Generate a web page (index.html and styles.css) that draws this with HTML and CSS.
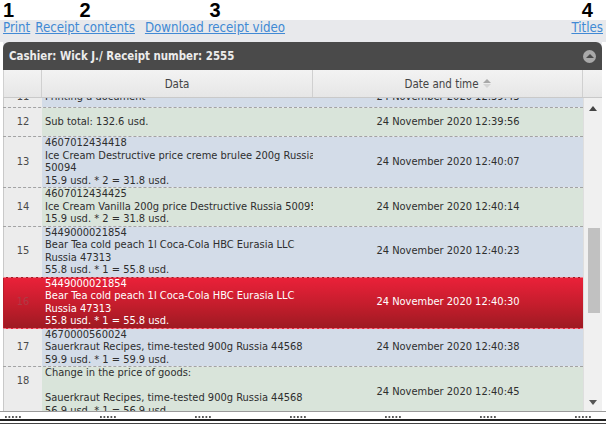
FILE: index.html
```html
<!DOCTYPE html>
<html lang="en">
<head>
  <meta charset="UTF-8">
  <title>Receipt</title>
  <link rel="stylesheet" href="styles.css">
</head>
<body>
  <div class="tools">
    <div class="tool first"><b>1</b><a href="#">Print</a></div>
    <div class="tool second"><b>2</b><a href="#">Receipt contents</a></div>
    <div class="tool third"><b>3</b><a href="#">Download receipt video</a></div>
    <div class="tool last"><b>4</b><a href="#">Titles</a></div>
  </div>

  <div class="panel">
    <div class="panel-head">
      <span>Cashier: Wick J./ Receipt number: 2555</span>
      <span class="collapse"></span>
    </div>
    <div class="cols">
      <div></div>
      <div>Data</div>
      <div>Date and time <span class="sort"><i class="up"></i><i class="down"></i></span></div>
      <div></div>
    </div>
    <div class="body">
      <div class="rows">
        <div class="rows-inner">
          <div class="row blue partial">
            <div class="num">11</div>
            <div class="data">Printing a document</div>
            <div class="date">24 November 2020 12:39:43</div>
          </div>
          <div class="row green">
            <div class="num">12</div>
            <div class="data">Sub total: 132.6 usd.</div>
            <div class="date">24 November 2020 12:39:56</div>
          </div>
          <div class="row blue">
            <div class="num">13</div>
            <div class="data">4607012434418<br>Ice Cream Destructive price creme brulee 200g Russia<br>50094<br>15.9 usd. * 2 = 31.8 usd.</div>
            <div class="date">24 November 2020 12:40:07</div>
          </div>
          <div class="row green">
            <div class="num">14</div>
            <div class="data">4607012434425<br>Ice Cream Vanilla 200g price Destructive Russia 50095<br>15.9 usd. * 2 = 31.8 usd.</div>
            <div class="date">24 November 2020 12:40:14</div>
          </div>
          <div class="row blue">
            <div class="num">15</div>
            <div class="data">5449000021854<br>Bear Tea cold peach 1l Coca-Cola HBC Eurasia LLC<br>Russia 47313<br>55.8 usd. * 1 = 55.8 usd.</div>
            <div class="date">24 November 2020 12:40:23</div>
          </div>
          <div class="row selected">
            <div class="num">16</div>
            <div class="data">5449000021854<br>Bear Tea cold peach 1l Coca-Cola HBC Eurasia LLC<br>Russia 47313<br>55.8 usd. * 1 = 55.8 usd.</div>
            <div class="date">24 November 2020 12:40:30</div>
          </div>
          <div class="row blue">
            <div class="num">17</div>
            <div class="data">4670000560024<br>Sauerkraut Recipes, time-tested 900g Russia 44568<br>59.9 usd. * 1 = 59.9 usd.</div>
            <div class="date">24 November 2020 12:40:38</div>
          </div>
          <div class="row green change">
            <div class="num">18</div>
            <div class="data">Change in the price of goods:<br>&nbsp;<br>Sauerkraut Recipes, time-tested 900g Russia 44568<br>56.9 usd. * 1 = 56.9 usd.</div>
            <div class="date">24 November 2020 12:40:45</div>
          </div>
        </div>
      </div>
      <div class="scroll">
        <div class="arrow"><i class="tri-up"></i></div>
        <div class="thumb"></div>
        <div class="arrow bottom"><i class="tri-down"></i></div>
      </div>
    </div>
  </div>

  <div class="splitter">
    <span class="grip"></span><span class="grip"></span><span class="grip"></span><span class="grip"></span>
    <span class="grip"></span><span class="grip"></span><span class="grip"></span>
  </div>
  <div class="rule"></div>
  <div class="rule thin"></div>
</body>
</html>
```

FILE: styles.css
```css
/* Reset */
* { box-sizing: border-box; margin: 0; padding: 0; }

body {
  width: 606px;
  height: 425px;
  overflow: hidden;
  background: #fff;
  font-family: "DejaVu Sans Condensed", "DejaVu Sans", sans-serif;
  font-size: 11px;
  color: #2e2e2e;
}

/* Toolbar with numbered links */
.tools {
  display: flex;
  padding: 0 3px 7px 3px;
  background: linear-gradient(#fff 0 20px, #e8e9ec 20px);
}
.tool {
  display: flex;
  flex-direction: column;
  align-items: center;
}
.tool.first { align-items: flex-start; }
.tool.second { margin-left: 5px; }
.tool.third { margin-left: 10px; }
.tool.last { margin-left: auto; }
.tool b {
  font-family: "Liberation Sans", Arial, sans-serif;
  font-size: 20px;
  line-height: 20px;
  height: 20px;
  color: #000;
}
.tool a {
  font-size: 13.2px;
  line-height: 15px;
  color: #4189d4;
  text-decoration: underline;
}

/* Panel */
.panel {
  margin: 0 4px 0 3px;
  background: #e8e9ec;
}
.panel-head {
  height: 28px;
  display: flex;
  align-items: center;
  justify-content: space-between;
  padding: 0 6px 0 6px;
  background: #4a4a4a;
  border-radius: 6px 6px 0 0;
  color: #ececec;
  font-size: 11.4px;
  font-weight: bold;
}
.collapse {
  width: 13px;
  height: 13px;
  border-radius: 50%;
  background: #a9a9a9;
  display: flex;
  align-items: center;
  justify-content: center;
}
.collapse::before {
  content: "";
  border-left: 4px solid transparent;
  border-right: 4px solid transparent;
  border-bottom: 4px solid #4a4a4a;
  margin-top: -1px;
}

/* Column headers */
.cols {
  display: grid;
  grid-template-columns: 39px 271px 270px 19px;
  height: 28px;
  background: linear-gradient(#f3f3f3, #e6e6e6);
  border-bottom: 1px solid #c9c9c9;
  color: #444;
  font-size: 11.5px;
  line-height: 14px;
}
.cols > div {
  display: flex;
  align-items: center;
  justify-content: center;
  border-right: 1px solid #d0d0d0;
}
.cols > div:first-child { border-left: 1px solid #d0d0d0; }
.cols > div:last-child { border-right: none; }
.sort {
  display: inline-flex;
  flex-direction: column;
  gap: 1px;
  margin-left: 4px;
}
.sort i {
  border-left: 4px solid transparent;
  border-right: 4px solid transparent;
}
.sort .up { border-bottom: 4px solid #a8a8a8; }
.sort .down { border-top: 4px solid #d4d4d4; }

/* Rows */
.body {
  display: flex;
  height: 313px;
  overflow: hidden;
}
.rows {
  width: 580px;
  overflow: hidden;
}
.rows-inner { margin-top: -19px; }
.row {
  display: grid;
  grid-template-columns: 39px 271px 270px;
  min-height: 29px;
  border-bottom: 1px dashed #a3a3a3;
  line-height: 12.5px;
}
.row .num {
  display: flex;
  align-items: center;
  justify-content: center;
  background: #ececec;
  border-left: 1px solid #c9c9c9;
  color: #4a4a4a;
}
.row .data {
  display: flex;
  flex-direction: column;
  justify-content: center;
  padding: 0 3px;
  white-space: nowrap;
  overflow: hidden;
}
.row .date {
  display: flex;
  align-items: center;
  justify-content: center;
}
.row.partial > div { padding-bottom: 4px; }
.row.partial .num,
.row.partial .date { align-items: flex-end; }
.row.partial .data { justify-content: flex-end; }
.row.change .num { padding-bottom: 22px; }
.blue .data, .blue .date { background: #d3dce8; }
.green .data, .green .date { background: #d9e4da; }
.row.selected {
  background: linear-gradient(#ea2139, #c31d2c 55%, #9e1a22);
  border-top: 1px dashed #f07e8c;
  border-bottom: 1px dashed #f07e8c;
  margin-top: -1px;
  color: #fff;
}
.row.selected .num {
  background: transparent;
  border-left-color: #b81c2a;
  color: #b13a45;
}

/* Scrollbar */
.scroll {
  width: 19px;
  display: flex;
  flex-direction: column;
  background: #f0f0f0;
  border-left: 1px solid #dedede;
}
.arrow {
  height: 20px;
  display: flex;
  align-items: center;
  justify-content: center;
}
.arrow.bottom { margin-top: auto; height: 18px; }
.tri-up, .tri-down {
  border-left: 4px solid transparent;
  border-right: 4px solid transparent;
}
.tri-up { border-bottom: 5px solid #444; }
.tri-down { border-top: 5px solid #555; }
.thumb {
  width: 12px;
  height: 85px;
  margin: 110px 0 0 4px;
  background: #c1c1c1;
}

/* Bottom splitter */
.splitter {
  display: flex;
  gap: 78px;
  height: 8px;
  padding: 4px 0 0 5px;
  border-top: 1px solid #9a9a9a;
}
.grip {
  width: 17px;
  height: 2px;
  background: linear-gradient(90deg, #555 0 2px, transparent 2px) 0 0 / 3.5px 2px repeat-x;
}
.rule {
  height: 2px;
  background: #222;
}
.rule.thin {
  height: 1px;
  margin-top: 2px;
  background: #444;
}
```
